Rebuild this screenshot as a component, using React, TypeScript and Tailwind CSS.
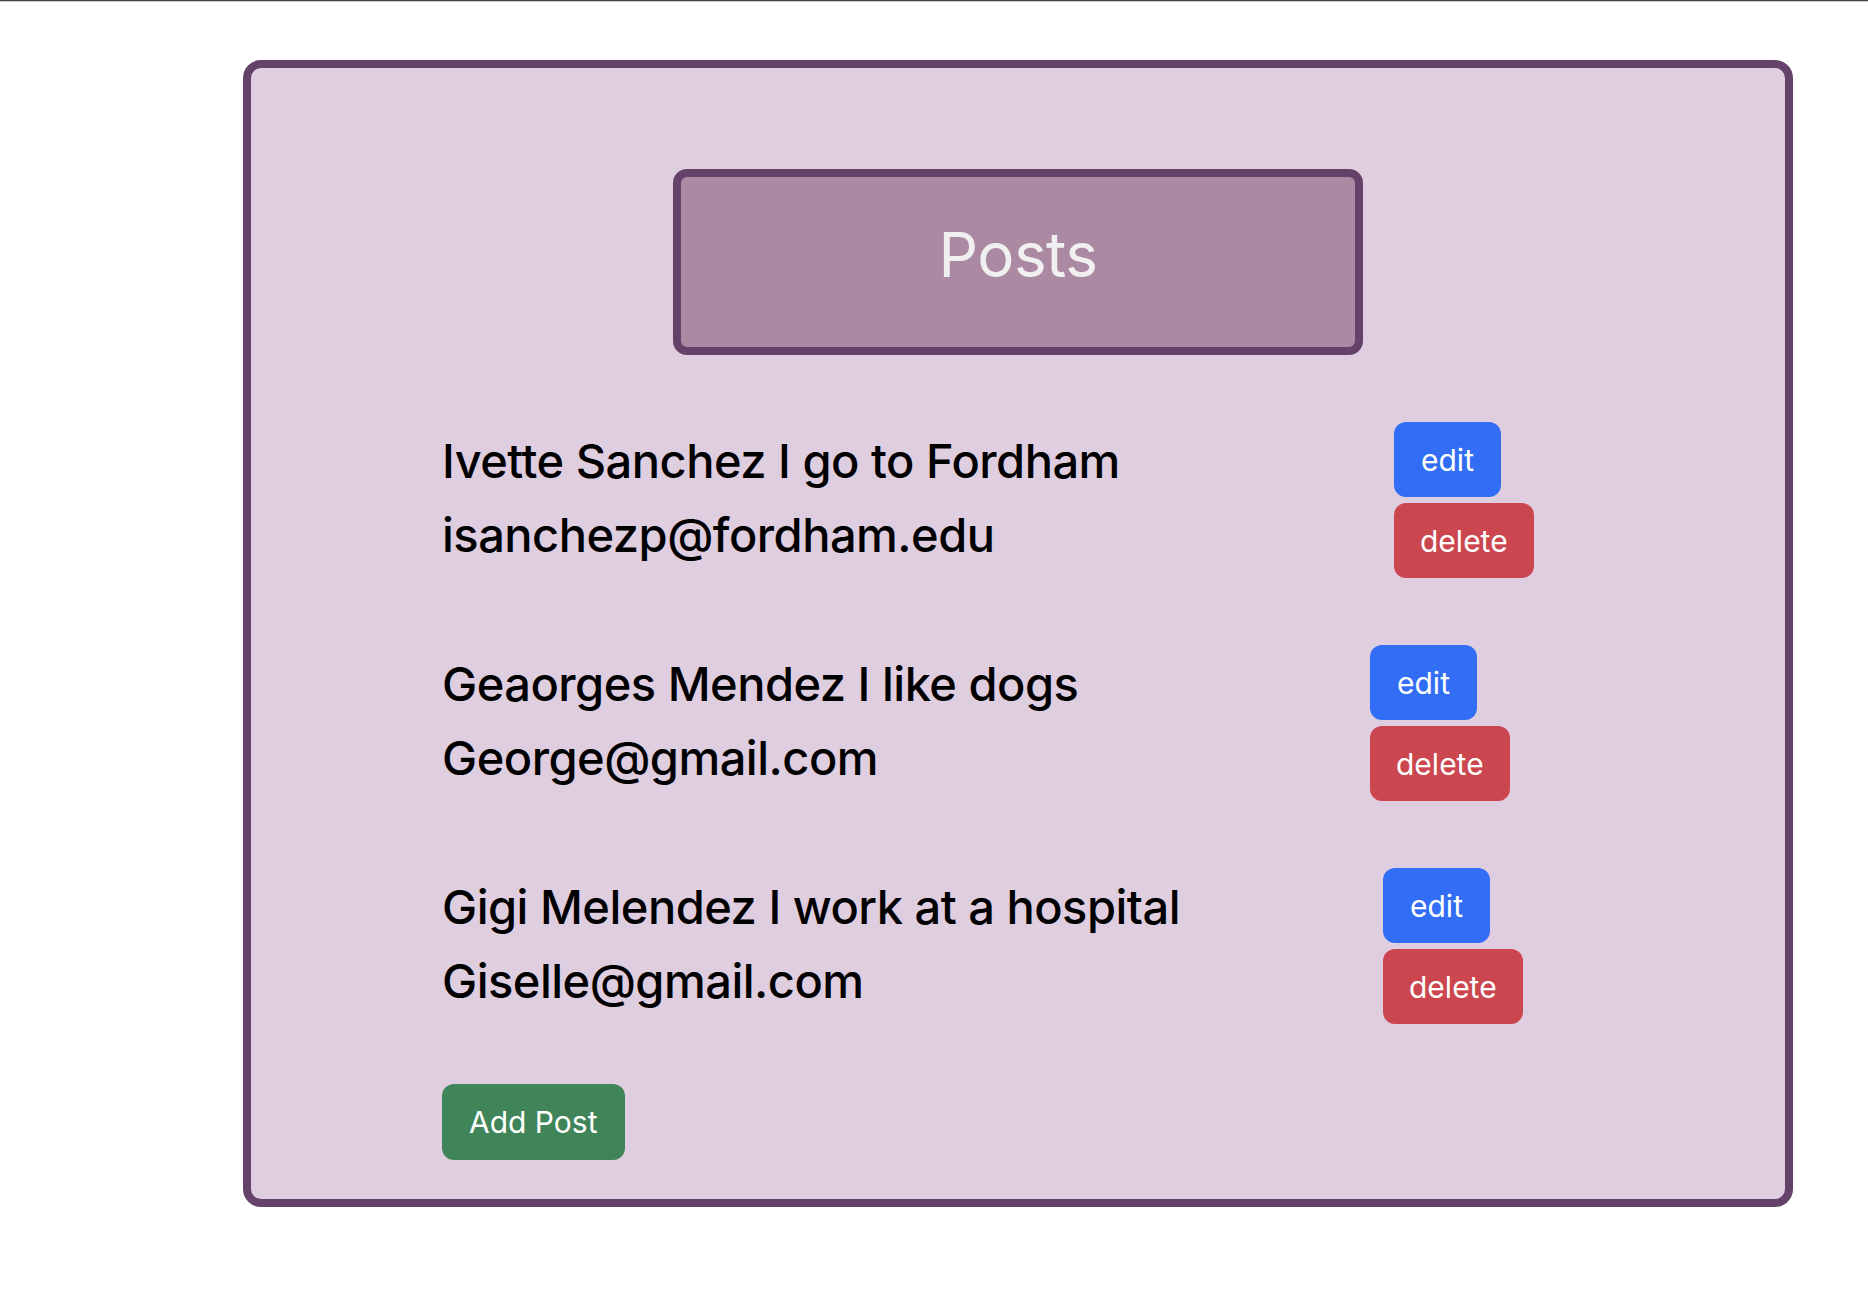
import React from 'react';

type Post = {
  name: string;
  content: string;
  email: string;
  // width of the text column, so the buttons land where they do in the reference
  textCol: string;
};

const posts: Post[] = [
  { name: 'Ivette Sanchez', content: 'I go to Fordham', email: 'isanchezp@fordham.edu', textCol: 'w-[952px]' },
  { name: 'Geaorges Mendez', content: 'I like dogs', email: 'George@gmail.com', textCol: 'w-[928px]' },
  { name: 'Gigi Melendez', content: 'I work at a hospital', email: 'Giselle@gmail.com', textCol: 'w-[941px]' },
];

function PostRow({ post }: { post: Post }) {
  return (
    <div className="flex items-start">
      <div className={`${post.textCol} pt-[2px] text-[47px] font-medium leading-[74px] text-black tracking-[-0.5px]`}>
        <div>{post.name} {post.content}</div>
        <div>{post.email}</div>
      </div>
      <div className="flex flex-col items-start gap-[6px]">
        <button className="h-[75px] px-[27px] rounded-[12px] bg-[#326ef5] text-white text-[30px] leading-none">
          edit
        </button>
        <button className="h-[75px] px-[26px] rounded-[12px] bg-[#cb464e] text-white text-[30px] leading-none">
          delete
        </button>
      </div>
    </div>
  );
}

export default function App() {
  return (
    <div className="min-h-screen bg-white font-['Inter',sans-serif]">
      {/* thin rule along the top edge */}
      <div className="h-px bg-[#444]" />
      <div className="h-px bg-[#c8c8c8]" />

      <div className="ml-[243px] mt-[58px] w-[1550px] h-[1147px] border-[8px] border-[#65426a] rounded-[18px] bg-[#dfcde0]">
        <div className="mx-auto mt-[101px] w-[690px] h-[186px] border-[8px] border-[#65426a] rounded-[14px] bg-[#ab89a3] flex items-center justify-center">
          <h1 className="text-[62px] leading-none text-[#f0f0f0] tracking-[-0.5px] -mt-[14px]">Posts</h1>
        </div>

        <div className="pl-[191px] mt-[67px] flex flex-col gap-[67px]">
          {posts.map((p) => (
            <PostRow key={p.email} post={p} />
          ))}
        </div>

        <div className="pl-[191px] mt-[60px]">
          <button className="h-[76px] px-[27px] rounded-[12px] bg-[#40845a] text-white text-[30px] leading-none">
            Add Post
          </button>
        </div>
      </div>
    </div>
  );
}
